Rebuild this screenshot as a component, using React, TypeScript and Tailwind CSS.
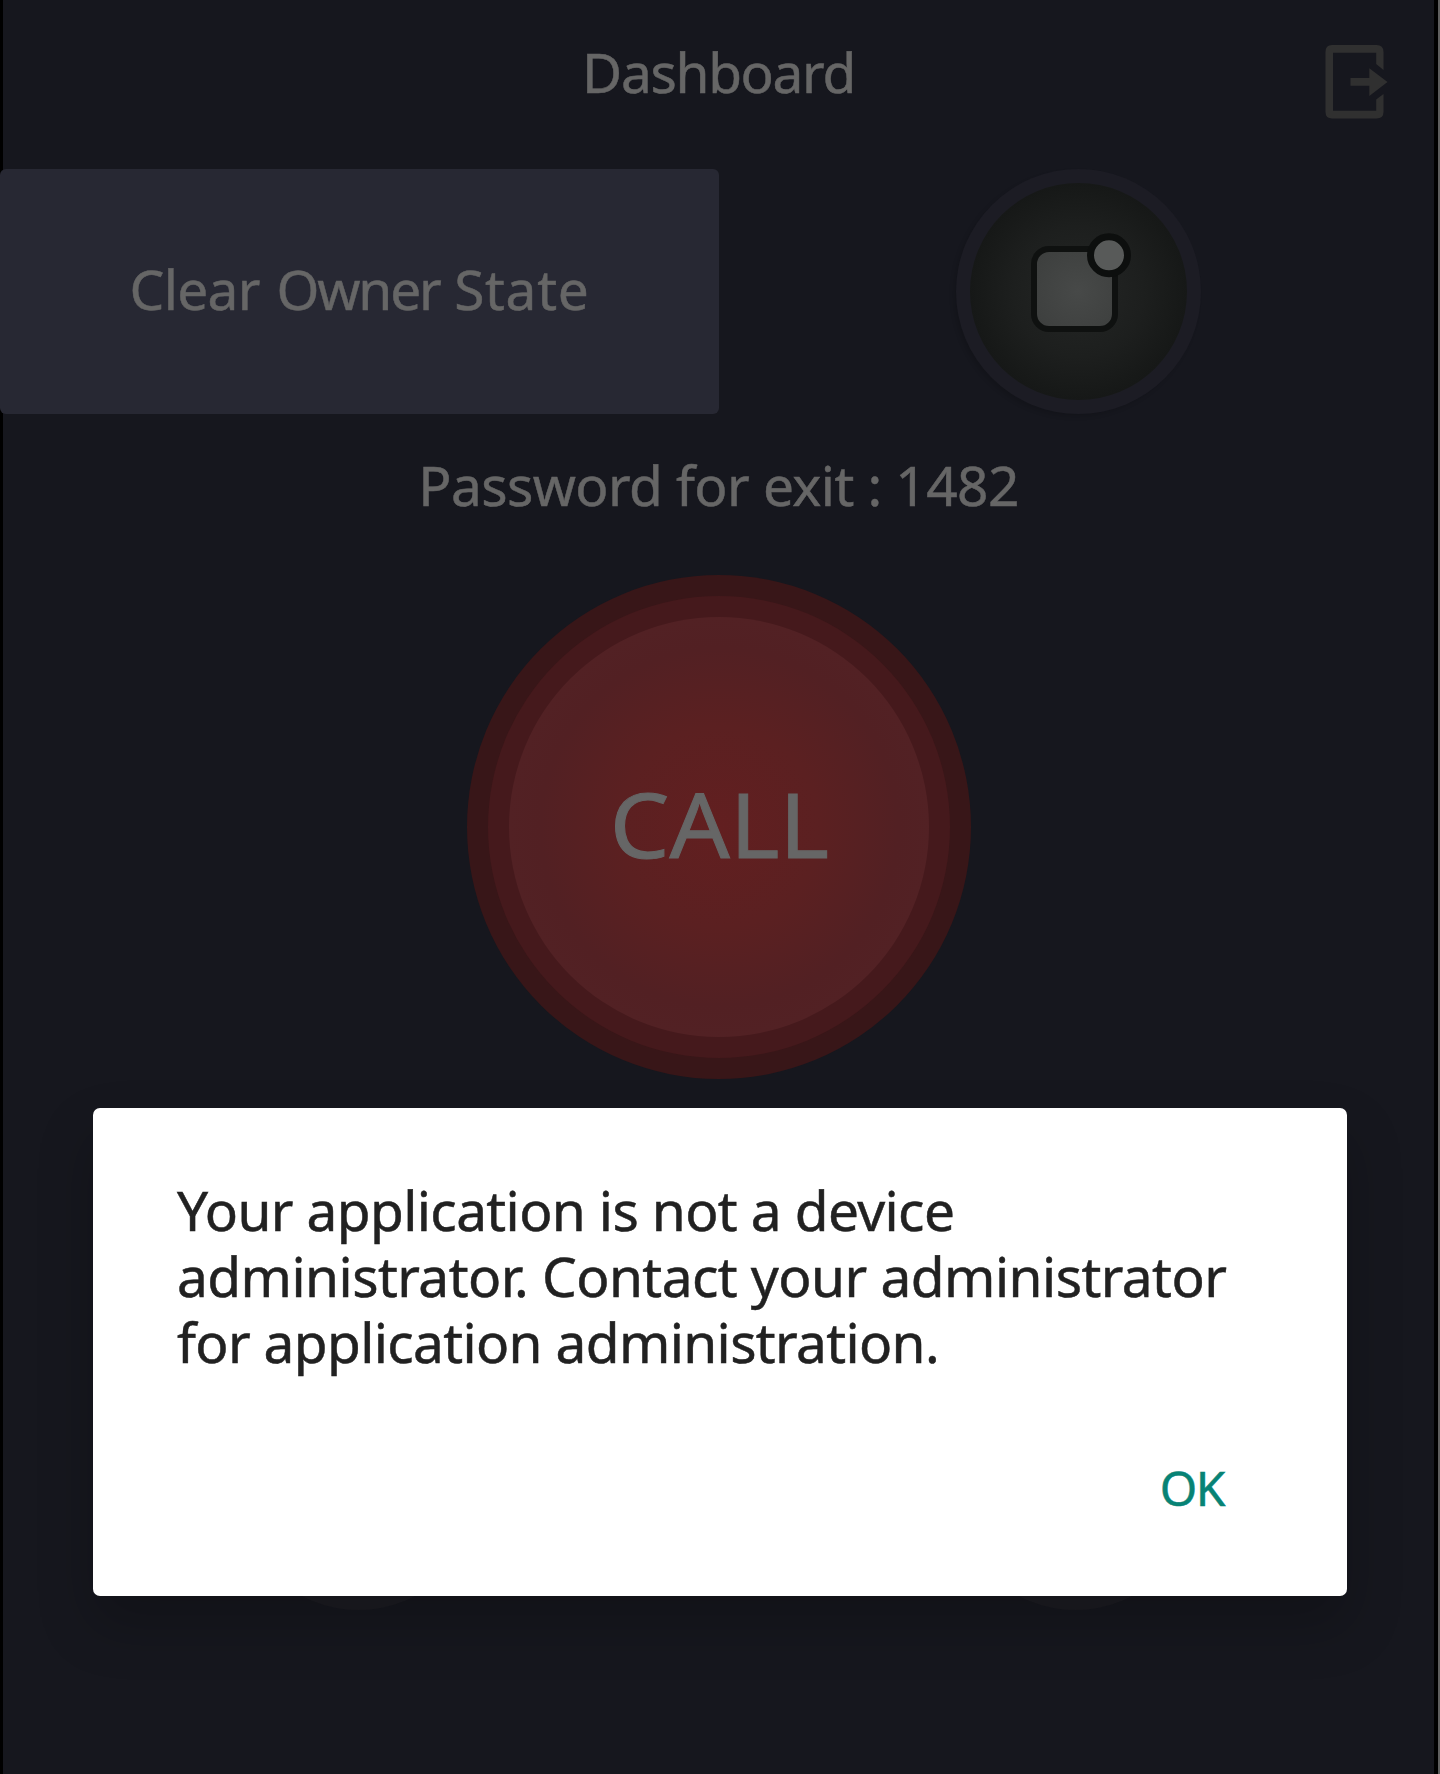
import React from "react";

function ExitIcon() {
  return (
    <svg className="block h-[74px] w-[63px]" viewBox="0 0 63 74" fill="#303030">
      <path d="M7 0H51.500Q58.500 0 58.500 7V25L51.200 19V7.700H8V65.700H51.200V54.500L58.500 49V67Q58.500 73.500 51.500 73.500H7Q0.500 73.500 0.500 67V7Q0.500 0 7 0Z" />
      <path d="M25.500 33H44.300V23.300L62.500 37L44.300 51V40.800H25.500Z" />
    </svg>
  );
}

function BadgeIcon() {
  return (
    <svg className="block h-[100px] w-[104px]" viewBox="0 0 104 100">
      <defs>
        <radialGradient id="tile" gradientUnits="userSpaceOnUse" cx="47" cy="58" r="60">
          <stop offset="0" stopColor="#474948" />
          <stop offset="1" stopColor="#3c3e3d" />
        </radialGradient>
      </defs>
      <rect x="3" y="16" width="81" height="80" rx="15" fill="url(#tile)" stroke="#0f1110" strokeWidth="6" />
      <circle cx="78" cy="22.300" r="18.500" fill="#585a59" stroke="#0d0f0e" strokeWidth="7" />
    </svg>
  );
}

export default function App() {
  return (
    <div className="relative flex h-[1774px] w-[1440px] overflow-hidden bg-black pl-[3px] font-['Noto_Sans',sans-serif] text-[55px] leading-[66px] text-[#666666] [-webkit-text-stroke:0.5px_currentColor]">
      <main className="flex w-[1431px] flex-col bg-[#16171e]">
        <header className="relative h-[169px] pt-[39px] text-center">
          <h1 className="tracking-[-1.33px]">Dashboard</h1>
          <button className="absolute top-[45px] right-[46px]" aria-label="Exit">
            <ExitIcon />
          </button>
        </header>

        <section className="-ml-[3px] flex h-[245px]">
          <button className="w-[719px] rounded-[6px] bg-[#272833] pb-[6px] tracking-[-0.64px]">
            Clear <span className="ml-[3px] tracking-[-2.2px]">Owner</span>{" "}
            <span className="ml-[1px] tracking-[0.7px]">State</span>
          </button>
          <div className="flex flex-1 justify-center pl-[3px]">
            <button
              aria-label="Apps"
              className="flex size-[245px] items-center justify-center rounded-full bg-[#1c1c24] shadow-[-3px_3px_4px_rgba(0,0,0,0.12)]"
            >
              <span className="flex size-[217px] items-center justify-center rounded-full bg-[radial-gradient(circle_closest-side,#242625_0%,#1d1f1e_60%,#161817_100%)] pb-[17px] pl-[9px]">
                <BadgeIcon />
              </span>
            </button>
          </div>
        </section>

        <p className="mt-[38px] text-center tracking-[-0.58px]">Password for exit : 1482</p>

        <button className="mt-[57px] flex size-[504px] items-center justify-center self-center rounded-full bg-[#381618]">
          <span className="flex size-[462px] items-center justify-center rounded-full bg-[#45191c]">
            <span className="flex size-[420px] items-center justify-center rounded-full bg-[radial-gradient(circle_closest-side,#621f20_0%,#5b2021_48%,#522023_85%,#522124_100%)] pb-[8px] pl-[2px] text-[90px] leading-[108px] [-webkit-text-stroke:1px_currentColor]">
              <span className="scale-x-[1.05]">CALL</span>
            </span>
          </span>
        </button>

        <section className="mt-[286px] -ml-[3px] grid grid-cols-2 justify-items-center">
          <div className="size-[245px] rounded-full bg-[#1c1c22]" />
          <div className="size-[245px] rounded-full bg-[#1c1c22]" />
        </section>
      </main>
      <div className="ml-[4px] w-[2px] bg-[#5f5f5f]" />

      <div
        role="dialog"
        className="absolute top-[1108px] left-[93px] h-[488px] w-[1254px] rounded-[7px] bg-white pt-[69px] pl-[84px] text-[#212121] shadow-[0_28px_56px_rgba(0,0,0,0.22)]"
      >
        <p className="tracking-[-0.62px]">Your application is not a device</p>
        <p className="tracking-[-0.55px]">administrator. Contact your administrator</p>
        <p className="tracking-[-0.65px]">for application administration.</p>
        <div className="mt-[80px] flex justify-end pr-[123px]">
          <button className="text-[48px] leading-[66px] tracking-[-1.5px] text-[#078375]">OK</button>
        </div>
      </div>
    </div>
  );
}
